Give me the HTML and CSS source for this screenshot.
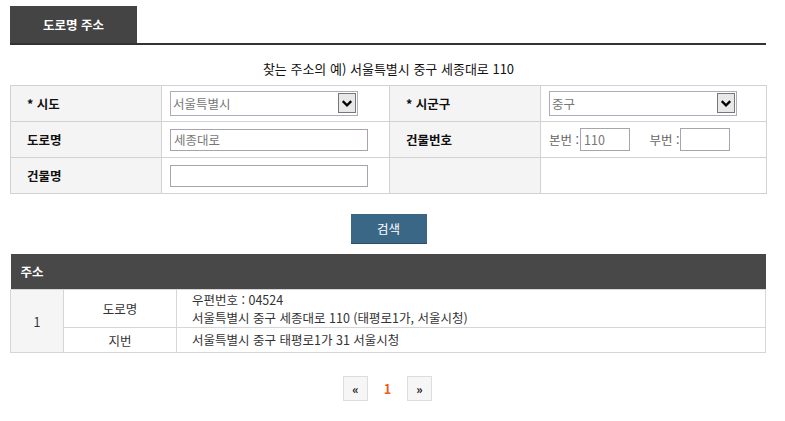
FILE: index.html
```html
<!DOCTYPE html>
<html lang="ko">
<head>
    <meta charset="UTF-8">
    <title>도로명 주소 검색</title>
    <link rel="stylesheet" href="styles.css">
</head>
<body>
    <div class="wrap">
        <!-- Tab -->
        <div class="tabs">
            <div class="tab">도로명 주소</div>
        </div>

        <p class="example">찾는 주소의 예) 서울특별시 중구 세종대로 110</p>

        <!-- Search form -->
        <table class="form-table">
            <colgroup>
                <col style="width:151px">
                <col style="width:228px">
                <col style="width:151px">
                <col>
            </colgroup>
            <tr>
                <th>* 시도</th>
                <td>
                    <div class="select">
                        <span class="select-value">서울특별시</span>
                        <span class="select-arrow">
                            <svg width="17" height="20" viewBox="0 0 17 20"><path d="M4 8 L8.5 12.5 L13 8" fill="none" stroke="#000" stroke-width="2.4"/></svg>
                        </span>
                    </div>
                </td>
                <th>* 시군구</th>
                <td>
                    <div class="select">
                        <span class="select-value">중구</span>
                        <span class="select-arrow">
                            <svg width="17" height="20" viewBox="0 0 17 20"><path d="M4 8 L8.5 12.5 L13 8" fill="none" stroke="#000" stroke-width="2.4"/></svg>
                        </span>
                    </div>
                </td>
            </tr>
            <tr>
                <th>도로명</th>
                <td><input type="text" class="text-input" value="세종대로"></td>
                <th>건물번호</th>
                <td class="num-cell">
                    <span class="num-label">본번 :</span><input type="text" class="num-input" value="110">
                    <span class="num-label sub">부번 :</span><input type="text" class="num-input">
                </td>
            </tr>
            <tr>
                <th>건물명</th>
                <td><input type="text" class="text-input"></td>
                <th></th>
                <td></td>
            </tr>
        </table>

        <div class="actions">
            <button type="button" class="search-btn">검색</button>
        </div>

        <!-- Results -->
        <table class="result-table">
            <colgroup>
                <col style="width:53px">
                <col style="width:113px">
                <col>
            </colgroup>
            <tr>
                <th colspan="3" class="result-head">주소</th>
            </tr>
            <tr class="row-road">
                <td rowspan="2" class="no">1</td>
                <td class="kind">도로명</td>
                <td class="addr">
                    <div>우편번호 : 04524</div>
                    <div>서울특별시 중구 세종대로 110 (태평로1가, 서울시청)</div>
                </td>
            </tr>
            <tr class="row-jibun">
                <td class="kind">지번</td>
                <td class="addr">서울특별시 중구 태평로1가 31 서울시청</td>
            </tr>
        </table>

        <div class="paging">
            <a class="page-btn">&laquo;</a>
            <span class="page-current">1</span>
            <a class="page-btn">&raquo;</a>
        </div>
    </div>
</body>
</html>
```

FILE: styles.css
```css
/* Global */
body {
    margin: 0;
    padding: 6px 10px 0 10px;
    font-family: "Noto Sans CJK KR", "Noto Sans", sans-serif;
    font-size: 12px;
    color: #222;
    background: #fff;
}

.wrap {
    width: 757px;
}

/* Tab */
.tabs {
    width: 756px;
    border-bottom: 2px solid #333;
    display: flex;
}

.tab {
    width: 127px;
    height: 37px;
    line-height: 37px;
    background-color: #444;
    color: #fff;
    font-weight: bold;
    font-size: 12.5px;
    text-align: center;
}

.example {
    margin: 0;
    height: 40px;
    line-height: 47px;
    text-align: center;
    font-size: 13px;
    color: #111;
}

/* Form table */
.form-table {
    width: 757px;
    border-collapse: collapse;
    table-layout: fixed;
}

.form-table th,
.form-table td {
    border: 1px solid #d2d2d2;
    height: 35px;
    padding: 0;
}

.form-table th {
    background-color: #f5f4f5;
    text-align: left;
    padding-left: 16px;
    font-size: 12.5px;
    font-weight: bold;
    color: #111;
}

.form-table td {
    padding-left: 8px;
}

.select {
    position: relative;
    width: 186px;
    height: 23px;
    border: 1px solid #b3a9b8;
    box-sizing: content-box;
    display: flex;
    align-items: center;
}

.select-value {
    padding-left: 2px;
    color: #777;
    font-size: 12.5px;
}

.select-arrow {
    position: absolute;
    right: 1px;
    top: 1px;
    width: 18px;
    height: 20px;
    background: #e8e8e8;
    border: 1px solid #777;
    box-sizing: border-box;
    display: flex;
    align-items: center;
    justify-content: center;
}

.select-arrow svg {
    display: block;
}

.text-input {
    width: 198px;
    height: 22px;
    border: 1px solid #aaa3ae;
    box-sizing: border-box;
    padding: 0 3px;
    font-family: inherit;
    font-size: 12.5px;
    color: #777;
    margin: 0;
    vertical-align: middle;
}

.num-cell {
    white-space: nowrap;
}

.num-label {
    color: #666;
    font-size: 12.5px;
    vertical-align: middle;
    margin-right: 1px;
}

.num-label.sub {
    margin-left: 16px;
}

.num-input {
    width: 50px;
    height: 23px;
    border: 1px solid #aaa3ae;
    box-sizing: border-box;
    padding: 0 3px;
    font-family: inherit;
    font-size: 12.5px;
    color: #777;
    margin: 0;
    vertical-align: middle;
}

/* Search button */
.actions {
    text-align: center;
    padding: 20px 0 10px 0;
}

.search-btn {
    width: 76px;
    height: 30px;
    background-color: #3b6787;
    border: none;
    border-bottom: 1px solid #2c4f69;
    color: #fff;
    font-family: inherit;
    font-size: 12.5px;
    cursor: pointer;
}

/* Results */
.result-table {
    width: 756px;
    border-collapse: collapse;
    table-layout: fixed;
}

.result-head {
    background-color: #484848;
    color: #fff;
    text-align: left;
    height: 35px;
    padding: 0 0 0 10px;
    font-size: 12.5px;
    font-weight: bold;
}

.result-table td {
    border: 1px solid #d6d6d6;
    padding: 0;
    color: #333;
    font-size: 12.5px;
}

.row-road td {
    height: 37px;
}

.row-jibun td {
    height: 24px;
}

.result-table .no {
    background-color: #f6f5f6;
    text-align: center;
}

.result-table .kind {
    text-align: center;
}

.result-table .addr {
    padding-left: 15px;
    line-height: 18px;
}

/* Paging */
.paging {
    display: flex;
    justify-content: center;
    align-items: center;
    margin-top: 23px;
    padding-right: 2px;
}

.page-btn {
    width: 25px;
    height: 25px;
    box-sizing: border-box;
    border: 1px solid #ddd;
    background-color: #f7f6f7;
    display: flex;
    align-items: center;
    justify-content: center;
    font-weight: bold;
    font-size: 12px;
    color: #111;
}

.page-current {
    width: 39px;
    text-align: center;
    color: #f05a22;
    font-weight: bold;
    font-size: 12.5px;
}
```
